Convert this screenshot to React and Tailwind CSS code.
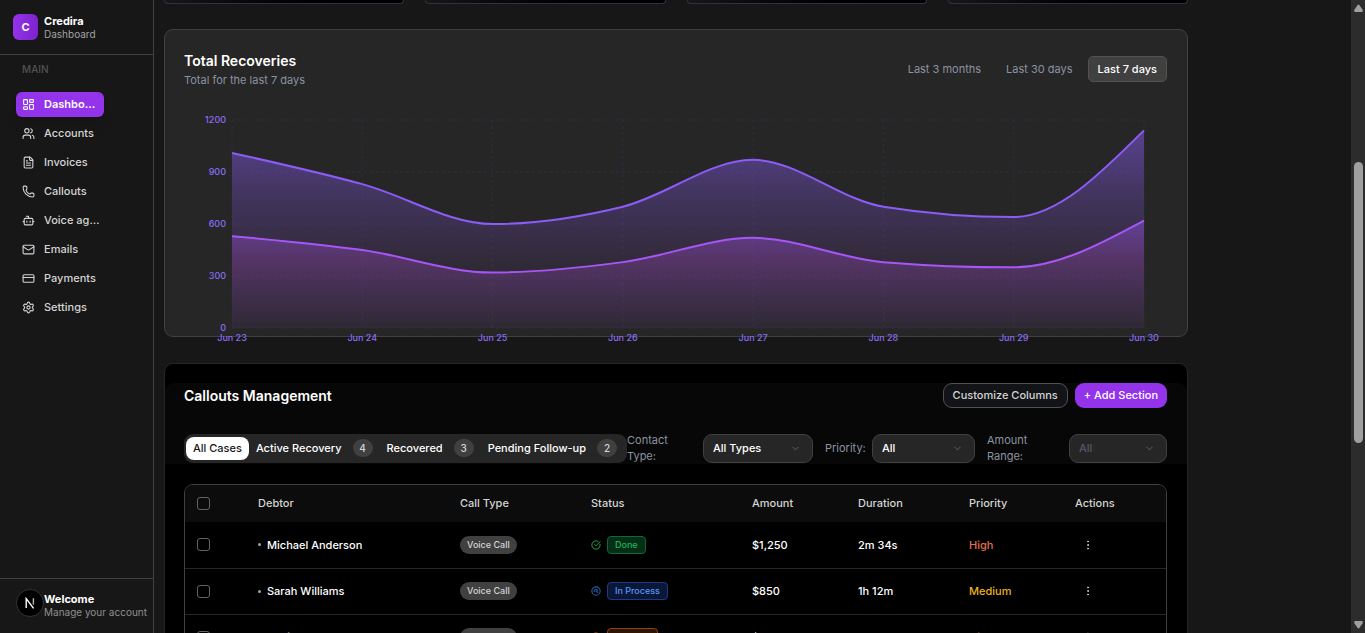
import { useState } from "react";
import {
  LayoutDashboard,
  Users,
  FileText,
  Phone,
  Bot,
  Mail,
  CreditCard,
  Settings,
  ChevronDown,
  EllipsisVertical,
  CircleCheckBig,
  Clock,
} from "lucide-react";

const navItems = [
  { label: "Dashboard", icon: LayoutDashboard, active: true },
  { label: "Accounts", icon: Users },
  { label: "Invoices", icon: FileText },
  { label: "Callouts", icon: Phone },
  { label: "Voice agents", icon: Bot },
  { label: "Emails", icon: Mail },
  { label: "Payments", icon: CreditCard },
  { label: "Settings", icon: Settings },
];

const ranges = ["Last 3 months", "Last 30 days", "Last 7 days"];

const recoveries = [
  { day: "Jun 23", partial: 530, total: 1010 },
  { day: "Jun 24", partial: 450, total: 830 },
  { day: "Jun 25", partial: 320, total: 600 },
  { day: "Jun 26", partial: 380, total: 700 },
  { day: "Jun 27", partial: 520, total: 970 },
  { day: "Jun 28", partial: 380, total: 700 },
  { day: "Jun 29", partial: 350, total: 640 },
  { day: "Jun 30", partial: 620, total: 1140 },
];

const tabs = [
  { label: "All Cases" },
  { label: "Active Recovery", count: 4 },
  { label: "Recovered", count: 3 },
  { label: "Pending Follow-up", count: 2 },
];

// Ring with a small inner sweep, used for calls still in process
const ProcessIcon = ({ size, className }) => (
  <svg
    width={size}
    height={size}
    viewBox="0 0 24 24"
    fill="none"
    stroke="currentColor"
    strokeWidth="2.6"
    strokeLinecap="round"
    className={className}
  >
    <circle cx="12" cy="12" r="10" />
    <path d="M7.5 13a4.5 4.5 0 0 1 8-3" />
    <path d="M12 12l4.5 3.5" />
  </svg>
);

const statusStyles = {
  Done: {
    icon: CircleCheckBig,
    iconClass: "text-[#22c55e]",
    badge: "bg-[#052e16] border-[#166534] text-[#22b455]",
  },
  "In Process": {
    icon: ProcessIcon,
    iconClass: "text-[#2b5ca8]",
    badge: "bg-[#0b1736] border-[#1e3a8a] text-[#5b95f5]",
  },
  Pending: {
    icon: Clock,
    iconClass: "text-[#b45309]",
    badge: "bg-[#2e1503] border-[#92400e] text-[#eab308]",
  },
};

const priorityStyles = {
  High: "text-[#e0734a]",
  Medium: "text-[#eab020]",
};

const cases = [
  { name: "Michael Anderson", type: "Voice Call", status: "Done", amount: "$1,250", duration: "2m 34s", priority: "High" },
  { name: "Sarah Williams", type: "Voice Call", status: "In Process", amount: "$850", duration: "1h 12m", priority: "Medium" },
  { name: "David Johnson", type: "Voice Call", status: "Pending", amount: "$2,100", duration: "45m 10s", priority: "High" },
];

// Plot area inside the chart's viewBox
const plot = { left: 48, right: 960, top: 10, bottom: 218, max: 1200 };

const toPoints = (key) =>
  recoveries.map((d, i) => [
    plot.left + (i * (plot.right - plot.left)) / (recoveries.length - 1),
    plot.bottom - (d[key] / plot.max) * (plot.bottom - plot.top),
  ]);

// Monotone cubic interpolation, returned as bezier segments
const curve = (pts) => {
  const n = pts.length;
  const slopes = pts.slice(1).map((p, i) => (p[1] - pts[i][1]) / (p[0] - pts[i][0]));
  const tangents = pts.map((_, i) => {
    if (i === 0 || i === n - 1) return 0;
    const a = slopes[i - 1];
    const b = slopes[i];
    if (a * b <= 0) return 0;
    return Math.sign(a) * Math.min(2 * Math.abs(a), 2 * Math.abs(b), Math.abs(a + b) / 2);
  });
  tangents[0] = (3 * slopes[0] - tangents[1]) / 2;
  tangents[n - 1] = (3 * slopes[n - 2] - tangents[n - 2]) / 2;
  return pts
    .slice(1)
    .map((p, i) => {
      const [x0, y0] = pts[i];
      const dx = (p[0] - x0) / 3;
      return `C${x0 + dx},${y0 + dx * tangents[i]} ${p[0] - dx},${p[1] - dx * tangents[i + 1]} ${p[0]},${p[1]}`;
    })
    .join("");
};

const line = (pts) => `M${pts[0]}${curve(pts)}`;

function Sidebar() {
  return (
    <aside className="flex w-[154px] shrink-0 flex-col border-r border-[#404040] bg-[#171717]">
      <div className="flex h-[55px] items-center gap-1.5 border-b border-[#404040] px-[13px]">
        <div className="flex h-[26px] w-[25px] items-center justify-center rounded-md bg-gradient-to-r from-[#9333ea] to-[#7e22ce] text-[11px] font-bold text-white">
          C
        </div>
        <div>
          <p className="text-[11px] leading-[14px] font-bold text-white">Credira</p>
          <p className="text-[10px] leading-[13px] text-[#a3a3a3]">Dashboard</p>
        </div>
      </div>
      <nav className="flex-1 px-4">
        <p className="mt-[7px] pl-1.5 text-[10px] leading-[14px] font-medium text-[#525252]">MAIN</p>
        <ul className="mt-4 flex flex-col gap-1">
          {navItems.map(({ label, icon: Icon, active }) => (
            <li key={label}>
              <a
                href="#"
                className={
                  active
                    ? "flex h-[25px] w-[88px] items-center gap-[9px] rounded-md bg-[#9333ea] pr-1.5 pl-1.5 text-[11px] font-semibold text-white shadow-lg"
                    : "flex h-[25px] w-[88px] items-center gap-[9px] rounded-md pl-1.5 text-[11px] font-medium text-[#d4d4d4]"
                }
              >
                <Icon size={13} className="shrink-0" />
                <span className="truncate">{label}</span>
              </a>
            </li>
          ))}
        </ul>
      </nav>
      <div className="flex h-[55px] items-start border-t border-[#404040] pt-2.5 pl-4">
        <div className="flex size-7 shrink-0 items-center justify-center rounded-full border border-[#333] bg-black">
          <svg viewBox="0 0 12 12" className="size-3" fill="none" stroke="white" strokeWidth="1.4">
            <path d="M2.2 11V1.6L9.6 11.4" />
            <path d="M9.4 1.2V7.6" strokeOpacity="0.7" />
          </svg>
        </div>
        <div className="pt-[3px] whitespace-nowrap">
          <p className="text-[11px] leading-[14px] font-bold text-white">Welcome</p>
          <p className="text-[10px] leading-[13px] text-[#8f8f8f]">Manage your account</p>
        </div>
      </div>
    </aside>
  );
}

function RecoveriesChart() {
  const lower = toPoints("partial");
  const upper = toPoints("total");
  // area between the two lines: the lower line is walked back from right to left
  const lowerBack = [...lower].reverse();

  return (
    <svg viewBox="0 0 984 226" className="mt-[22px] block h-auto w-full overflow-visible">
      <defs>
        <linearGradient id="fillTotal" x1="0" y1="0" x2="0" y2="1">
          <stop offset="0%" stopColor="#8b5cf6" stopOpacity="0.5" />
          <stop offset="50%" stopColor="#8b5cf6" stopOpacity="0.25" />
          <stop offset="100%" stopColor="#a855f7" stopOpacity="0.06" />
        </linearGradient>
        <linearGradient id="fillPartial" x1="0" y1="0" x2="0" y2="1">
          <stop offset="0%" stopColor="#9055f6" stopOpacity="0.55" />
          <stop offset="40%" stopColor="#b251e4" stopOpacity="0.32" />
          <stop offset="100%" stopColor="#a855f7" stopOpacity="0.06" />
        </linearGradient>
      </defs>
      <g stroke="#6d4fe0" strokeOpacity="0.14" strokeDasharray="3 3">
        {[0, 300, 600, 900, 1200].map((v) => {
          const y = plot.bottom - (v / plot.max) * (plot.bottom - plot.top);
          return <line key={v} x1={plot.left} x2={plot.right} y1={y} y2={y} />;
        })}
        {upper.map(([x]) => (
          <line key={x} x1={x} x2={x} y1={plot.top} y2={plot.bottom} />
        ))}
      </g>
      <path
        d={`M${lower[0]}${curve(lower)}L${plot.right},${plot.bottom}L${plot.left},${plot.bottom}Z`}
        fill="url(#fillPartial)"
      />
      <path d={line(lower)} fill="none" stroke="#a855f7" strokeWidth="2" />
      <path
        d={`${line(upper)}L${lowerBack[0]}${curve(lowerBack)}Z`}
        fill="url(#fillTotal)"
      />
      <path d={line(upper)} fill="none" stroke="#8b5cf6" strokeWidth="2" />
      <g fill="#8b6cf6" fontSize="9" fontWeight="500">
        {[0, 300, 600, 900, 1200].map((v) => (
          <text
            key={v}
            x={42}
            y={plot.bottom - (v / plot.max) * (plot.bottom - plot.top) + 3}
            textAnchor="end"
          >
            {v}
          </text>
        ))}
        {recoveries.map((d, i) => (
          <text key={d.day} x={upper[i][0]} y={231} textAnchor="middle">
            {d.day}
          </text>
        ))}
      </g>
    </svg>
  );
}

function Filter({ id, label, options, labelClass, boxClass, disabled }) {
  return (
    <>
      <label htmlFor={id} className={`text-[11px] leading-4 text-[#8b93a1] ${labelClass}`}>
        {label}
      </label>
      <div className={`relative shrink-0 ${boxClass}`}>
        <select
          id={id}
          disabled={disabled}
          className="block h-[29px] w-full appearance-none rounded-[9px] border border-[#404040] bg-[#262626] px-[9px] text-[11px] font-medium text-white disabled:text-[#5b5566] disabled:opacity-100"
        >
          {options.map((o) => (
            <option key={o}>{o}</option>
          ))}
        </select>
        <ChevronDown size={11} className="pointer-events-none absolute top-[9px] right-3 text-[#666]" />
      </div>
    </>
  );
}

function CalloutsTable() {
  const box =
    "block size-[13px] appearance-none rounded-[3px] border border-[#636363] bg-transparent checked:bg-[#9333ea]";
  return (
    <div className="mr-5 ml-[19px] mt-5 overflow-hidden rounded-[9px] border border-[#404040]">
      <table className="w-full table-fixed text-left text-[11px]">
        <colgroup>
          <col className="w-[60px]" />
          <col className="w-[202px]" />
          <col className="w-[131px]" />
          <col className="w-[161px]" />
          <col className="w-[106px]" />
          <col className="w-[111px]" />
          <col className="w-[106px]" />
          <col />
        </colgroup>
        <thead className="bg-[#0c0c0c] text-[#d4d4d4]">
          <tr className="h-[37px]">
            <th className="pl-3">
              <input type="checkbox" aria-label="Select all" className={box} />
            </th>
            {["Debtor", "Call Type", "Status", "Amount", "Duration", "Priority", "Actions"].map((h) => (
              <th key={h} className="pl-[13px] font-medium">
                {h}
              </th>
            ))}
          </tr>
        </thead>
        <tbody>
          {cases.map((c) => {
            const status = statusStyles[c.status];
            const StatusIcon = status.icon;
            return (
              <tr key={c.name} className="h-[46px] border-b border-[#262626] font-medium text-white">
                <td className="pl-3">
                  <input type="checkbox" aria-label={`Select ${c.name}`} className={box} />
                </td>
                <td className="pl-[13px]">
                  <div className="flex items-center gap-1.5">
                    <span className="size-[3px] rounded-full bg-[#a3a3a3]" />
                    {c.name}
                  </div>
                </td>
                <td className="pl-[13px]">
                  <span className="flex h-[18px] w-fit items-center rounded-full bg-[#404040] px-[7px] text-[9px] text-[#d4d4d4]">
                    {c.type}
                  </span>
                </td>
                <td className="pl-[13px]">
                  <div className="flex items-center gap-1.5">
                    <StatusIcon size={10} className={status.iconClass} />
                    <span className={`flex h-[18px] items-center rounded-sm border px-[7px] text-[9px] ${status.badge}`}>
                      {c.status}
                    </span>
                  </div>
                </td>
                <td className="pl-[13px]">{c.amount}</td>
                <td className="pl-[13px]">{c.duration}</td>
                <td className={`pl-[13px] ${priorityStyles[c.priority]}`}>{c.priority}</td>
                <td className="pl-5">
                  <button type="button" aria-label="Row actions" className="block text-[#d4d4d4]">
                    <EllipsisVertical size={12} />
                  </button>
                </td>
              </tr>
            );
          })}
        </tbody>
      </table>
    </div>
  );
}

function Callouts() {
  const [tab, setTab] = useState("All Cases");
  return (
    <section className="mt-[26px] rounded-t-[9px] border border-[#262626] bg-black pt-[19px] pb-10">
      <div className="rounded-t-[9px] bg-[#070707] pr-5 pl-[19px]">
        <div className="flex items-center justify-between">
          <h2 className="text-[14px] leading-5 font-semibold text-white">Callouts Management</h2>
          <div className="flex gap-[7px]">
            <button
              type="button"
              className="h-[25px] rounded-[9px] border border-[#525252] bg-[#121418] px-[9px] text-[11px] font-medium text-[#d4d4d4]"
            >
              Customize Columns
            </button>
            <button
              type="button"
              className="h-[25px] rounded-[9px] bg-[#9333ea] px-[9px] text-[11px] font-medium text-white"
            >
              + Add Section
            </button>
          </div>
        </div>
        <div className="mt-6 flex items-center">
          <div className="flex h-[29px] shrink-0 items-center rounded-[9px] bg-[#262626] pr-[3px] pl-0.5">
            {tabs.map((t) => (
              <button
                key={t.label}
                type="button"
                onClick={() => setTab(t.label)}
                className={
                  tab === t.label
                    ? "flex h-[23px] items-center gap-[11px] rounded-lg bg-white px-[7px] text-[11px] font-medium text-[#171717]"
                    : "flex h-[23px] items-center gap-[11px] rounded-lg px-[7px] text-[11px] font-medium text-white"
                }
              >
                {t.label}
                {t.count && (
                  <span className="flex h-[18px] w-5 items-center justify-center rounded-full bg-[#404040] text-[10px] text-[#d4d4d4]">
                    {t.count}
                  </span>
                )}
              </button>
            ))}
          </div>
          <div className="flex flex-1 items-center">
            <Filter id="type" label="Contact Type:" options={["All Types", "Voice Call"]} labelClass="flex-1 pr-6" boxClass="w-[110px]" />
            <Filter id="priority" label="Priority:" options={["All", "High", "Medium"]} labelClass="ml-3 w-[47px]" boxClass="w-[103px]" />
            <Filter id="amount" label="Amount Range:" options={["All"]} labelClass="ml-3 w-[82px] pr-6" boxClass="w-[98px]" disabled />
          </div>
        </div>
      </div>
      <CalloutsTable />
    </section>
  );
}

function Scrollbar() {
  return (
    <div className="flex w-3.5 shrink-0 flex-col items-center bg-[#2c2c2c] py-1">
      <svg viewBox="0 0 9 8" className="h-2 w-[9px]" fill="#9f9f9f">
        <path d="M4.5 0.5Q5 0.5 5.5 1.2L8.8 6Q9 8 8 8H1Q0 8 0.2 6L3.5 1.2Q4 0.5 4.5 0.5Z" />
      </svg>
      <div className="flex w-[9px] flex-1 flex-col">
        <div className="flex-[150]" />
        <div className="flex-[281] rounded-full bg-[#9f9f9f]" />
        <div className="flex-[178]" />
      </div>
      <svg viewBox="0 0 9 8" className="h-2 w-[9px] rotate-180" fill="#9f9f9f">
        <path d="M4.5 0.5Q5 0.5 5.5 1.2L8.8 6Q9 8 8 8H1Q0 8 0.2 6L3.5 1.2Q4 0.5 4.5 0.5Z" />
      </svg>
    </div>
  );
}

export default function App() {
  const [range, setRange] = useState("Last 7 days");
  return (
    <div className="flex h-screen overflow-hidden bg-[#171717] font-['Inter',sans-serif]">
      <Sidebar />
      <main className="min-w-0 flex-1 overflow-hidden pl-2.5">
        <div className="max-w-5xl">
          <div className="grid grid-cols-4 gap-[21px]">
            {[0, 1, 2, 3].map((i) => (
              <div
                key={i}
                className="h-1 rounded-b-[9px] border-x border-b border-[#352f45] bg-gradient-to-r from-[#171717] to-black shadow-lg"
              />
            ))}
          </div>
          <section className="mt-[25px] rounded-[9px] border border-[#404040] bg-[#262626] px-[19px] pt-5">
            <div className="flex items-center justify-between pr-px">
              <div>
                <h2 className="text-[14px] leading-[22px] font-semibold text-white">Total Recoveries</h2>
                <p className="text-[11px] leading-4 text-[#8b93a1]">Total for the last 7 days</p>
              </div>
              <div className="flex gap-[5px]">
                {ranges.map((r) => (
                  <button
                    key={r}
                    type="button"
                    onClick={() => setRange(r)}
                    className={
                      range === r
                        ? "h-[26px] rounded-[5px] border border-[#525252] bg-[#404040] px-[9px] text-[11px] font-medium text-white"
                        : "h-[26px] rounded-[5px] border border-transparent px-[9px] text-[11px] text-[#8b93a1]"
                    }
                  >
                    {r}
                  </button>
                ))}
              </div>
            </div>
            <RecoveriesChart />
          </section>
          <Callouts />
        </div>
      </main>
      <Scrollbar />
    </div>
  );
}
